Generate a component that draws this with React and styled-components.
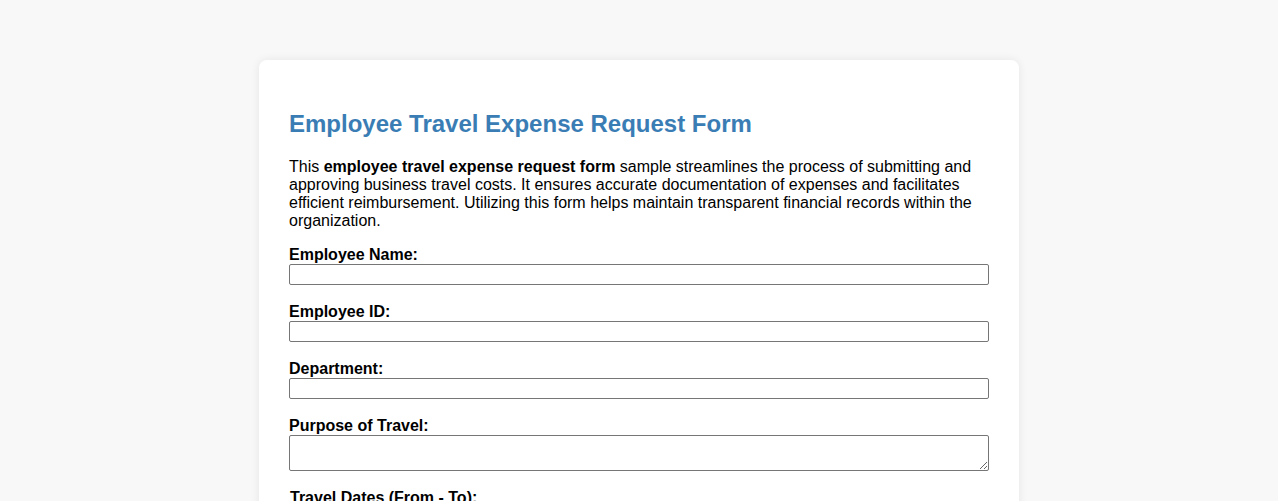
import React from "react";
import styled, { createGlobalStyle } from "styled-components";

const Global = createGlobalStyle`
  html, body { margin: 0; padding: 0; }
  body {
    background: #f8f8f8;
    font-family: "Liberation Sans", Arial, sans-serif;
    color: #000;
  }
`;

const Page = styled.div`
  padding: 60px 0 40px;
`;

const Card = styled.div`
  width: 700px;
  margin: 0 auto;
  background: #fff;
  padding: 30px;
  border-radius: 8px;
  box-shadow: 0 0 10px rgba(0, 0, 0, 0.08);
`;

const Title = styled.h2`
  font-size: 24px;
  font-weight: bold;
  color: #3a7db5;
  margin: 20px 0;
`;

const Intro = styled.p`
  font-size: 16px;
  margin: 0 0 16px;
`;

const Field = styled.div`
  margin-bottom: 18px;
`;

const Label = styled.label`
  display: block;
  font-weight: bold;
  font-size: 16px;
  margin-left: ${(p) => (p.$shift ? "1px" : "0")};
`;

const Input = styled.input`
  display: block;
  box-sizing: border-box;
  width: 100%;
  height: 21px;
  margin: 0;
  border: 1px solid #767676;
  border-radius: 2px;
  font-size: 13.33px;
  padding: 1px 2px;
`;

const TextArea = styled.textarea`
  display: block;
  box-sizing: border-box;
  width: 100%;
  height: 36px;
  margin: 0;
  border: 1px solid #767676;
  border-radius: 2px;
  font-size: 13.33px;
  padding: 2px;
`;

export default function App() {
  return (
    <>
      <Global />
      <Page>
        <Card>
          <Title>Employee Travel Expense Request Form</Title>
          <Intro>
            This <b>employee travel expense request form</b> sample streamlines the process of
            submitting and approving business travel costs. It ensures accurate documentation of
            expenses and facilitates efficient reimbursement. Utilizing this form helps maintain
            transparent financial records within the organization.
          </Intro>
          <Field>
            <Label>Employee Name:</Label>
            <Input type="text" />
          </Field>
          <Field>
            <Label>Employee ID:</Label>
            <Input type="text" />
          </Field>
          <Field>
            <Label>Department:</Label>
            <Input type="text" />
          </Field>
          <Field>
            <Label>Purpose of Travel:</Label>
            <TextArea />
          </Field>
          <Field>
            <Label $shift>Travel Dates (From - To):</Label>
            <Input type="text" />
          </Field>
          <Field>
            <Label>Destination:</Label>
            <Input type="text" />
          </Field>
        </Card>
      </Page>
    </>
  );
}
